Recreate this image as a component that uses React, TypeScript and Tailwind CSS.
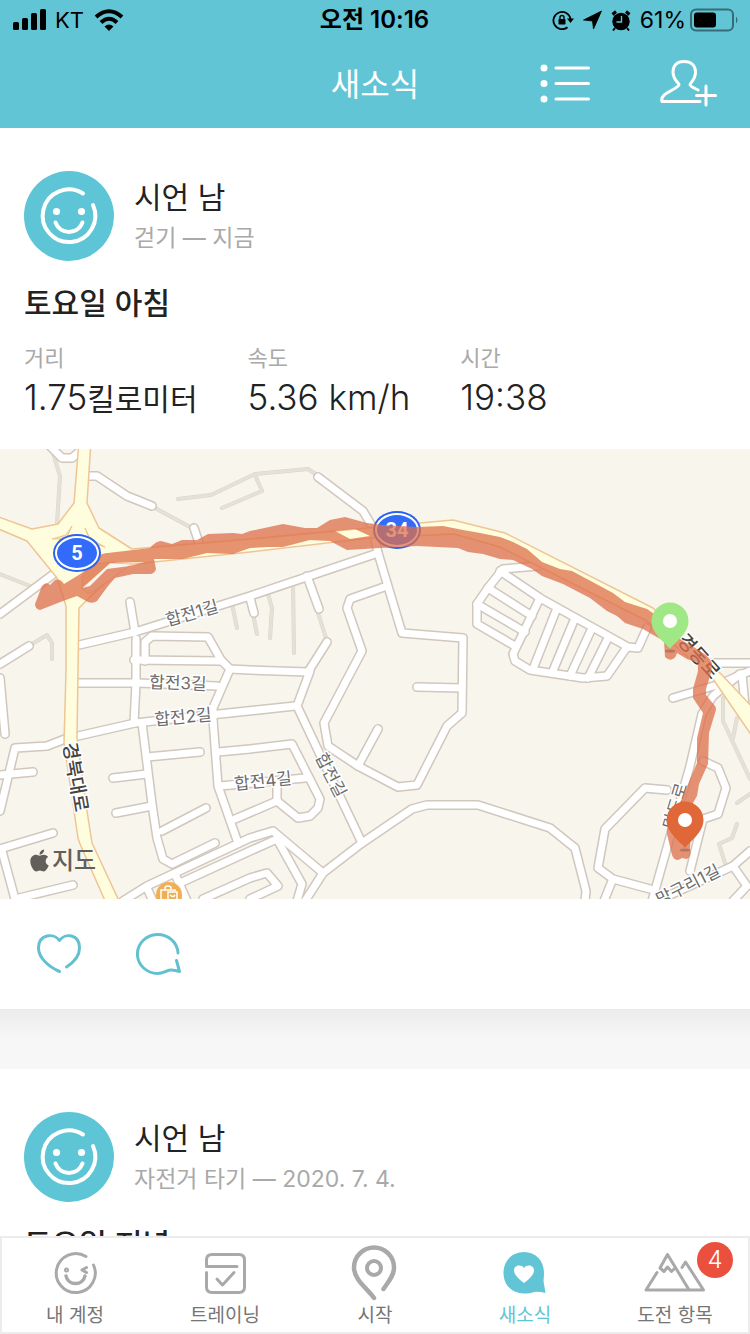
import type { ReactNode } from "react";
import { FaApple } from "react-icons/fa";

interface Stat {
  label: string;
  value: string;
  unit?: string;
}

interface Activity {
  id: string;
  user: string;
  meta: string;
  title: string;
  stats?: Stat[];
}

const activities: Activity[] = [
  {
    id: "walk",
    user: "시언 남",
    meta: "걷기 — 지금",
    title: "토요일 아침",
    stats: [
      { label: "거리", value: "1.75", unit: "킬로미터" },
      { label: "속도", value: "5.36 km/h" },
      { label: "시간", value: "19:38" },
    ],
  },
  { id: "ride", user: "시언 남", meta: "자전거 타기 — 2020. 7. 4.", title: "토요일 저녁" },
];

// Street geometry, in map units (viewBox 0 448 750 450)
const streets = [
  "M50 445L62 457H72L79 451",
  "M89 475H97L127 495L152 505",
  "M194 527L200 545",
  "M0 613L55 572",
  "M0 663L29 645",
  "M130 601L135 631",
  "M79 644L135 631L250 595L378 552",
  "M136 638V682L134 722",
  "M145 660V641L152 635L208 636L221 659L230 668L250 669L308 671L327 641",
  "M134 659L220 660",
  "M250 597L254 612",
  "M318 476L363 510L372 525L378 552L402 632L463 637L462 712L447 725L417 784L398 786L358 765L328 745L324 722L362 650L347 607L350 598L387 585",
  "M307 575L319 608",
  "M538 565L503 568L488 587L477 603V623L515 645",
  "M500 570L540 597L628 646L638 647L647 627",
  "M488 587L532 615",
  "M477 603L525 631",
  "M540 597L513 653L515 660L530 669L583 677L607 675L627 646",
  "M557 607L533 668",
  "M575 617L552 672",
  "M592 627L570 675",
  "M608 637L588 677",
  "M713 662H750",
  "M750 670L717 684L673 697",
  "M742 673L745 705",
  "M78 682H137L217 685",
  "M230 668L213 707V718L218 785L238 842",
  "M78 735L135 722L295 705",
  "M65 738L47 745L15 747L0 810",
  "M0 774L33 771",
  "M0 677L5 733",
  "M0 848L53 832",
  "M2 850L15 898L73 884",
  "M142 722L152 803L157 837L163 858L172 863L215 842",
  "M147 756L200 751",
  "M113 777L147 773",
  "M116 812L152 805",
  "M162 830L206 807",
  "M218 751L250 748L292 743L320 798L318 807L310 815L298 817L277 800L235 818",
  "M220 785L305 777",
  "M277 800V785",
  "M123 900L147 885L250 837L273 830L323 872",
  "M180 882L250 850L277 838L302 883L297 900",
  "M147 887L153 900",
  "M175 873L187 900",
  "M203 898L250 877L267 872L278 885L250 898",
  "M310 670L297 705L362 842",
  "M358 765L378 728",
  "M417 686L462 687",
  "M305 900L323 872L362 842L412 808L427 804H478L550 827L575 847L586 890L585 900",
  "M667 789L645 787L605 828L598 867L613 878L650 888",
  "M612 880L604 900",
  "M740 673L713 695L702 713L690 765L652 900",
  "M703 760L718 767L726 787L718 813L703 818L690 870",
  "M750 850L733 865L657 900",
  "M733 865L747 885L733 900",
];

const footpaths = [
  "M53 452L60 475L57 523",
  "M155 507L190 526",
  "M178 498L211 494L255 473L308 468L317 474",
  "M222 507L262 490L255 474",
  "M0 573L30 585",
  "M32 643L47 634L52 642V658",
  "M232 603L237 627",
  "M253 613L257 633",
  "M268 593L272 607L270 637",
  "M293 583L294 652",
  "M318 612L326 637",
  "M723 697V720L750 778",
  "M737 717L733 737",
  "M737 802L750 793",
  "M737 823L732 837L719 843L725 862",
];

const highway =
  "M79 440L74 502L58 523L32 528L-4 515V527L27 540L57 577L66 605V670L64 742L78 837L80 843L106 902H120L92 842L87 810L77 737L78 670L79 607L93 593L125 564L250 551L370 537L454 533L500 546L647 620L713 678L754 738V708L722 674L653 607L505 532L453 519L420 522L250 538L132 548L99 527L87 502L91 440Z";

const route =
  "M35 603L42 585Q46 580 50 584L55 579Q60 577 64 583L82 572L97 556Q102 552 108 552L150 547Q156 540 161 540L172 543L182 539H197L208 533L233 532L242 533L250 530L283 523L305 527H317L330 519L345 516L367 522L383 524L417 526L443 525L463 529L480 532L500 536L513 541L527 548L542 561L560 568L572 570L600 585L613 592L625 601L647 608L657 615L680 638L700 650Q713 658 712 665L711 672L706 688V694L715 705Q717 708 715 712L709 732L708 763L699 783L697 795L693 802L690 847Q692 855 687 858L682 857Q675 862 672 854L667 833L668 815L680 802L688 783L697 762V737L703 712L693 697V688L698 670V662L687 658L677 652L676 655Q671 662 665 656L664 640L655 635L643 628L625 622L617 615L607 610L590 597L563 583L542 575L532 568L513 559L500 558L483 553L468 551L458 547L417 545L380 547L347 549L330 540L310 539L283 546H268L250 547L233 553L207 552L183 558H154L156 568Q155 572 151 573H133L115 577L108 585L97 600Q93 603 88 601L77 595L63 600L40 609Q35 608 35 603ZM82 587L110 562L145 561L130 565L107 568L90 585ZM335 530L355 528L370 535L350 538Z";

const mapLabels = [
  { text: "합전1길", x: 192, y: 612, angle: -16 },
  { text: "합전3길", x: 178, y: 682, angle: 2 },
  { text: "합전2길", x: 183, y: 716, angle: -5 },
  { text: "합전4길", x: 263, y: 780, angle: -6 },
  { text: "합전길", x: 331, y: 774, angle: 63 },
  { text: "만도로", x: 675, y: 805, angle: -73 },
  { text: "망구리1길", x: 688, y: 884, angle: -27 },
];

const roadLabels = [
  { text: "경북대로", x: 76, y: 776, angle: 80 },
  { text: "경동로", x: 699, y: 655, angle: 48 },
];

function RouteShield({ x, y, label }: { x: number; y: number; label: string }) {
  return (
    <g>
      <ellipse cx={x} cy={y} rx="24" ry="19" fill="#2c63ee" />
      <ellipse cx={x} cy={y} rx="22" ry="17" fill="#fff" />
      <ellipse cx={x} cy={y} rx="20" ry="15" fill="#326bfa" />
      <text x={x} y={y + 7} textAnchor="middle" className="fill-white text-[20px] font-bold font-['Roboto',sans-serif]">
        {label}
      </text>
    </g>
  );
}

function MapPin({ x, y, color }: { x: number; y: number; color: string }) {
  return (
    <g transform={`translate(${x} ${y})`}>
      <ellipse cx="0" cy="30" rx="5" ry="1.500" fill="#8b5a48" opacity="0.5" />
      <path d="M0 28C-4 22-18.500 13-18.500 0A18.500 18.500 0 0 1 18.500 0C18.500 13 4 22 0 28Z" fill={color} />
      <circle r="7" fill="#fff" />
    </g>
  );
}

function ActivityMap() {
  return (
    <svg
      viewBox="0 448 750 450"
      preserveAspectRatio="xMidYMid slice"
      className="block w-full bg-[#f8f5ed] font-['Inter','Noto_Sans_CJK_KR',sans-serif]"
      role="img"
      aria-label="지도"
    >
      <g fill="none" strokeLinecap="round" strokeLinejoin="round">
        <g stroke="#d9d5ca" strokeWidth="4">
          {footpaths.map((d) => <path key={d} d={d} />)}
        </g>
        <g stroke="#e5e1d6" strokeWidth="3">
          {footpaths.map((d) => <path key={d} d={d} />)}
        </g>
        <g stroke="#d0c7be" strokeWidth="10">
          {streets.map((d) => <path key={d} d={d} />)}
        </g>
        <g stroke="#fff" strokeWidth="7">
          {streets.map((d) => <path key={d} d={d} />)}
        </g>
      </g>
      <path d={highway} fill="#fefddd" stroke="#efc594" strokeWidth="1.500" strokeLinejoin="round" />
      <g fill="#f8e3b9" stroke="#efc594" strokeWidth="1">
        <path d="M72 525L66 534L52 538L66 538Z" />
        <path d="M85 527L89 537L105 546L92 542Z" />
        <path d="M82 588V575L95 563L115 561Z" />
      </g>
      <path d="M82 587L110 562L132 563L94 590L88 593Z" fill="#f8f5ed" stroke="#efc594" />

      {mapLabels.map((label) => (
        <text
          key={label.text}
          transform={`translate(${label.x} ${label.y}) rotate(${label.angle})`}
          y="6"
          textAnchor="middle"
          className="fill-[#6c6c6c] stroke-white stroke-3 text-[17px] [paint-order:stroke]"
        >
          {label.text}
        </text>
      ))}
      {roadLabels.map((label) => (
        <text
          key={label.text}
          transform={`translate(${label.x} ${label.y}) rotate(${label.angle})`}
          y="7"
          textAnchor="middle"
          className="fill-[#444] stroke-white stroke-3 text-[19px] font-medium [paint-order:stroke]"
        >
          {label.text}
        </text>
      ))}

      <RouteShield x={397} y={529} label="34" />
      <path d={route} fill="#dd6f49" fillOpacity="0.750" fillRule="evenodd" />
      <RouteShield x={77} y={552} label="5" />
      <MapPin x={670} y={620} color="#a0e785" />
      <MapPin x={685} y={819} color="#e06838" />

      {/* shop marker */}
      <circle cx="169" cy="894" r="13" fill="#f2ae52" />
      <g fill="none" stroke="#fff" strokeWidth="1.500">
        <path d="M166 900H161V889H175V890M165 889V887Q165 885 168 885T171 887V889" />
        <path d="M168 900V891H177V900M170 894Q173 897 175 894" />
      </g>

      <FaApple x="27" y="847" size={25} color="#625f5b" />
      <text x="52" y="868" className="fill-[#625f5b] text-[24px] font-medium">지도</text>
    </svg>
  );
}

function Avatar() {
  return (
    <svg viewBox="0 0 90 90" className="size-[90px] shrink-0" aria-hidden="true">
      <circle cx="45" cy="45" r="45" fill="#5dc5d6" />
      <g fill="none" stroke="#fff" strokeWidth="4" strokeLinecap="round">
        <path d="M69 34A26.300 26.300 0 1 1 59 22.500" />
        <path d="M31.500 51.500C36 64 54 64 58.500 51.500" />
      </g>
      <circle cx="32.500" cy="40.500" r="3.600" fill="#fff" />
      <circle cx="57.500" cy="40.500" r="3.600" fill="#fff" />
    </svg>
  );
}

function ActivityHeader({ activity }: { activity: Activity }) {
  return (
    <div className="px-6 pt-[43px]">
      <div className="flex items-center gap-5">
        <Avatar />
        <div className="pt-1">
          <h2 className="text-[30px] leading-10">{activity.user}</h2>
          <p className="text-[23px] leading-[42px] text-[#a9a9a9]">{activity.meta}</p>
        </div>
      </div>
      <h3 className="mt-[22px] text-[30px] leading-10 font-medium">{activity.title}</h3>
      {activity.stats && (
        <dl className="mt-[18px] flex gap-[50px]">
          {activity.stats.map((stat) => (
            <div key={stat.label}>
              <dt className="text-[22px] leading-[34px] text-[#a9a9a9]">{stat.label}</dt>
              <dd className="text-[35px] leading-11 font-light">
                {stat.value}
                {stat.unit && <span className="text-[30px] font-normal">{stat.unit}</span>}
              </dd>
            </div>
          ))}
        </dl>
      )}
    </div>
  );
}

function StatusBar() {
  return (
    <div className="grid h-10 grid-cols-[1fr_auto_1fr] items-center pr-[10px] pl-[13px] text-[22px] leading-10 text-black">
      <div className="flex items-center gap-2">
        <svg viewBox="0 0 34 22" className="h-[22px] w-[34px]" aria-hidden="true">
          <rect x="0" y="13" width="6" height="8" rx="1.500" />
          <rect x="9" y="9" width="6" height="12" rx="1.500" />
          <rect x="18" y="4" width="6" height="17" rx="1.500" />
          <rect x="27" y="0" width="6" height="21" rx="1.500" />
        </svg>
        <span>KT</span>
        <svg viewBox="0 0 30 22" className="ml-0.5 h-[22px] w-[30px]" aria-hidden="true">
          <path d="M15 22L10.500 17.500Q15 13.500 19.500 17.500Z" />
          <path d="M7 13.500Q15 6 23 13.500M2 8Q15-3.500 28 8" fill="none" stroke="#000" strokeWidth="4" />
        </svg>
      </div>
      <time className="pr-1 text-2xl leading-10 font-semibold">오전 10:16</time>
      <div className="flex items-center justify-end gap-[9px]">
        <svg viewBox="0 0 22 20" className="h-5 w-[22px]" aria-hidden="true">
          <path d="M15.500 17.200A8.600 8.600 0 1 1 18.500 9" fill="none" stroke="#000" strokeWidth="1.800" />
          <path d="M15 8.500H22L18.500 13Z" />
          <rect x="6.500" y="9" width="7" height="5.500" rx="0.800" />
          <path d="M8 9V7.500Q8 5.500 10 5.500T12 7.500V9" fill="none" stroke="#000" strokeWidth="1.400" />
        </svg>
        <svg viewBox="0 0 19 20" className="h-5 w-[19px]" aria-hidden="true">
          <path d="M18.500 1L10.500 19L9.500 11L0.500 10Z" stroke="#000" strokeWidth="0.800" strokeLinejoin="round" />
        </svg>
        <svg viewBox="0 0 20 21" className="h-[21px] w-5" aria-hidden="true">
          <circle cx="10" cy="11.500" r="8.700" />
          <path d="M1.500 4.500L5 1.500M15 1.500L18.500 4.500" stroke="#000" strokeWidth="3" />
          <path d="M4 18L2 20.500M16 18L18 20.500" stroke="#000" strokeWidth="2" />
          <path d="M10.500 6V12H5.500" fill="none" stroke="#62c5d5" strokeWidth="1.400" />
        </svg>
        <div className="flex items-center gap-1">
          <span className="text-[23px]">61%</span>
          <svg viewBox="0 0 50 24" className="h-6 w-[50px]" aria-hidden="true">
            <rect x="1" y="1.500" width="42" height="21" rx="5" fill="none" stroke="#000" strokeOpacity="0.450" strokeWidth="2" />
            <rect x="4" y="4.500" width="22" height="15" rx="3" />
            <path d="M46 8.500Q49 12 46 15.500Z" fillOpacity="0.450" />
          </svg>
        </div>
      </div>
    </div>
  );
}

function NavBar() {
  return (
    <div className="grid h-[88px] grid-cols-[1fr_auto_1fr] items-center pr-8">
      <h1 className="col-start-2 pt-0.5 pl-8 text-[32px] leading-10 text-white">새소식</h1>
      <div className="flex items-center justify-end gap-[69px]">
        <button type="button" aria-label="목록">
          <svg viewBox="0 0 51 46" className="block h-[46px] w-[51px]" aria-hidden="true">
            <g fill="#fff">
              <circle cx="4" cy="7" r="3.500" />
              <circle cx="4" cy="22.500" r="3.500" />
              <circle cx="4" cy="38" r="3.500" />
            </g>
            <path d="M16 7H48.500M16 22.500H48.500M16 38H48.500" stroke="#fff" strokeWidth="3" strokeLinecap="round" />
          </svg>
        </button>
        <button type="button" aria-label="친구 추가">
          <svg viewBox="660 60 58 48" className="block h-12 w-[58px]" fill="none" stroke="#fff" strokeWidth="3" strokeLinecap="round" strokeLinejoin="round" aria-hidden="true">
            <path d="M700 101.500H662C659 93 679 89 679 84.500C679 83 673 80 673 72C673 65.500 677 61.500 684 61.500S695.500 65.500 695.500 72C695.500 80 690 83 690 84.500C690 86.500 694 88 698 90" />
            <path d="M696.500 95.500H715.500M706 86V105" />
          </svg>
        </button>
      </div>
    </div>
  );
}

const tabs: { id: string; label: string; icon: ReactNode; badge?: number }[] = [
  {
    id: "account",
    label: "내 계정",
    icon: (
      <svg viewBox="45 1243 60 60" className="size-[60px]" fill="none" stroke="#a9a9a9" strokeWidth="3" strokeLinecap="round" strokeLinejoin="round">
        <path d="M93.500 1265A19.500 19.500 0 1 1 86 1256.500" />
        <path d="M66 1276C68 1286 83 1286 85 1276" strokeWidth="3.500" />
        <path d="M86.500 1267.500L82 1270L86.500 1272.500" />
        <circle cx="66.500" cy="1270" r="1" />
      </svg>
    ),
  },
  {
    id: "training",
    label: "트레이닝",
    icon: (
      <svg viewBox="195 1243 60 60" className="size-[60px]" fill="none" stroke="#a9a9a9" strokeWidth="3" strokeLinecap="round" strokeLinejoin="round">
        <path d="M237 1266.500H206.500V1260Q206.500 1254.500 212 1254.500H239Q244.500 1254.500 244.500 1260V1287Q244.500 1292.500 239 1292.500H212Q206.500 1292.500 206.500 1287V1272.500" />
        <path d="M217 1279L222.500 1285L234 1272.500" />
      </svg>
    ),
  },
  {
    id: "start",
    label: "시작",
    icon: (
      <svg viewBox="345 1243 60 60" className="size-[60px]" fill="none" stroke="#a9a9a9" strokeWidth="4.500" strokeLinecap="round" strokeLinejoin="round">
        <path d="M383.500 1289C388 1282 394 1276 394 1267.500A20 20 0 0 0 354 1267.500C354 1280 368 1289 374 1298" />
        <circle cx="374" cy="1268" r="7" strokeWidth="4" />
      </svg>
    ),
  },
  {
    id: "feed",
    label: "새소식",
    icon: (
      <svg viewBox="495 1243 60 60" className="size-[60px]">
        <path d="M524 1252C536 1252 544 1261 544 1273C544 1279 543 1280 544 1284L545.500 1293Q538 1291 534 1292C531 1293 528 1293.500 524 1293.500C512 1293.500 503.500 1285 503.500 1273S512 1252 524 1252Z" fill="#62c5d5" />
        <path d="M524 1283C520 1280 514 1275 514 1270.500C514 1265 521 1264 524 1268C527 1264 534 1265 534 1270.500C534 1275 528 1280 524 1283Z" fill="#fff" />
      </svg>
    ),
  },
  {
    id: "challenges",
    label: "도전 항목",
    badge: 4,
    icon: (
      <svg viewBox="645 1243 60 60" className="size-[60px] overflow-visible" fill="none" stroke="#a9a9a9" strokeWidth="3" strokeLinecap="round" strokeLinejoin="round">
        <path d="M657 1272.500L646 1290H703.500L685.500 1262L682 1267.500" />
        <path d="M688.500 1289L667.500 1254.500L660 1268L664 1271.500L667.500 1267L671.500 1271.500L675 1268" />
      </svg>
    ),
  },
];

function TabBar({ active }: { active: string }) {
  return (
    <nav className="grid h-[98px] shrink-0 grid-cols-5 bg-white shadow-[inset_0_0_0_2px_#ececec]">
      {tabs.map((tab) => (
        <button
          key={tab.id}
          type="button"
          aria-current={tab.id === active ? "page" : undefined}
          className={`flex flex-col items-center pt-[7px] text-[19px] leading-[26px] ${tab.id === active ? "text-[#62c5d5]" : "text-[#757575]"}`}
        >
          <span className="relative">
            {tab.icon}
            {tab.badge && (
              <span className="absolute -top-px -right-7 flex size-9 items-center justify-center rounded-full bg-[#eb4f3d] text-2xl font-light text-white">
                {tab.badge}
              </span>
            )}
          </span>
          {tab.label}
        </button>
      ))}
    </nav>
  );
}

export default function App() {
  const [latest, previous] = activities;

  return (
    <div className="flex h-screen flex-col overflow-hidden bg-white font-['Inter','Noto_Sans_CJK_KR',sans-serif] text-[#222]">
      <header className="shrink-0 bg-[#62c5d5]">
        <StatusBar />
        <NavBar />
      </header>

      <main className="min-h-0 flex-1 overflow-hidden">
        <article>
          <ActivityHeader activity={latest} />
          <div className="mt-7">
            <ActivityMap />
          </div>
          <div className="flex h-[110px] items-center gap-[54px] px-9">
            <button type="button" aria-label="좋아요">
              <svg viewBox="36 930 46 46" className="block size-[46px]" fill="none" stroke="#62c0d0" strokeWidth="3" strokeLinecap="round" strokeLinejoin="round" aria-hidden="true">
                <path d="M66.500 966C75 960.500 79.500 954 79.500 947C79.500 933 65 931.500 59.500 939.500C54 931.500 38.500 933 38.500 947C38.500 957 49 966 59.500 970.500" />
              </svg>
            </button>
            <button type="button" aria-label="댓글">
              <svg viewBox="136 930 46 46" className="block size-[46px]" fill="none" stroke="#62c0d0" strokeWidth="3" strokeLinecap="round" strokeLinejoin="round" aria-hidden="true">
                <path d="M178 952A20.300 19.500 0 1 0 157.500 972.500C167 972.500 166 966 179.500 970.500L176.500 959.500" />
              </svg>
            </button>
          </div>
        </article>
        <div className="h-[60px] bg-linear-to-b from-[#ebebeb] to-[#f7f7f7] to-50%" />
        <article>
          <ActivityHeader activity={previous} />
        </article>
      </main>

      <TabBar active="feed" />
    </div>
  );
}
